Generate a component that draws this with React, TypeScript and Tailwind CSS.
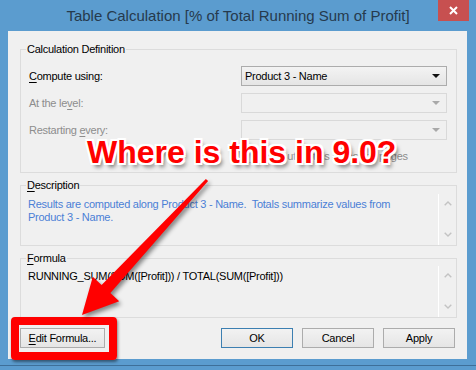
const ui = "[font-family:'Liberation_Sans',Arial,sans-serif] text-[11px] tracking-[-0.25px]";

function Caret({ disabled }: { disabled?: boolean }) {
  return (
    <svg width="8" height="4" viewBox="0 0 8 4" className="block">
      <path d="M0 0 H8 L4 4 Z" fill={disabled ? "#a9a9a9" : "#111"} />
    </svg>
  );
}

function Chevron({ up }: { up?: boolean }) {
  return (
    <svg width="8" height="5" viewBox="0 0 8 5" className="block">
      <path
        d={up ? "M0.7 4.3 L4 1 L7.3 4.3" : "M0.7 0.7 L4 4 L7.3 0.7"}
        fill="none"
        stroke="#c3c3c3"
        strokeWidth="1.4"
      />
    </svg>
  );
}

function Select({ value, disabled }: { value?: string; disabled?: boolean }) {
  return (
    <div
      className={`flex h-[20px] w-[206px] items-center justify-between border pl-[3px] pr-[6px] ${
        disabled
          ? "border-[#d9d9d9] bg-[#f0f0f0]"
          : "border-[#acacac] bg-linear-to-b from-[#f3f3f3] to-[#e5e5e5] text-black"
      }`}
    >
      <span>{value}</span>
      <Caret disabled={disabled} />
    </div>
  );
}

function Scroller({ className }: { className: string }) {
  return (
    <div className={`flex w-[18px] flex-col items-center justify-between border-l border-white ${className}`}>
      <Chevron up />
      <Chevron />
    </div>
  );
}

function Button({ children, primary }: { children: React.ReactNode; primary?: boolean }) {
  return (
    <button
      className={`flex h-[20px] w-[72px] items-center justify-center border bg-linear-to-b from-[#f2f2f2] to-[#e5e5e5] text-black ${
        primary ? "border-[#3c7fb1]" : "border-[#acacac]"
      }`}
    >
      {children}
    </button>
  );
}

export default function App() {
  return (
    <div className={`relative flex h-[370px] w-[476px] flex-col overflow-hidden bg-[#5b9ccf] ${ui}`}>
      {/* title bar */}
      <div className="grid h-[31px] grid-cols-[38px_1fr_38px]">
        <div />
        <div className="text-center text-[15px] leading-[31px] tracking-normal text-[#263a4d]">
          Table Calculation [% of Total Running Sum of Profit]
        </div>
        <div className="flex h-[21px] w-[31px] items-center justify-center bg-[#c75050]">
          <svg width="9" height="9" viewBox="0 0 9 9">
            <path d="M1 1 L8 8 M8 1 L1 8" stroke="#fff" strokeWidth="2" />
          </svg>
        </div>
      </div>

      {/* client area */}
      <div className="mx-[8px] flex h-[328px] w-[459px] flex-col bg-[#f0f0f0] text-black">
        <fieldset className="mt-[11px] ml-[12px] mr-[10px] h-[131px] border border-[#dcdcdc]">
          <legend className="ml-[5px] px-[1px] leading-[14px]">Calculation Definition</legend>
          <div className="flex flex-col gap-[7px] pt-[10px] pl-[8px] pr-[9px]">
            <div className="flex items-center justify-between">
              <span>
                <u className="underline-offset-2">C</u>ompute using:
              </span>
              <Select value="Product 3 - Name" />
            </div>
            <div className="flex items-center justify-between text-[#8d8d8d]">
              <span>
                At the le<u className="underline-offset-2">v</u>el:
              </span>
              <Select disabled />
            </div>
            <div className="flex items-center justify-between text-[#8d8d8d]">
              <span>
                Restarting <u className="underline-offset-2">e</u>very:
              </span>
              <Select disabled />
            </div>
            <div className="mt-[2px] flex h-[14px] items-center justify-end text-[#8d8d8d]">
              <div className="flex w-[206px] items-center gap-[5px] leading-[14px]">
                <span className="h-[13px] w-[13px] border border-[#c5c5c5] bg-[#f4f4f4]" />
                <span>Compute totals across all pages</span>
              </div>
            </div>
          </div>
        </fieldset>

        <fieldset className="mt-[5px] ml-[12px] mr-[10px] h-[68px] border border-[#dcdcdc]">
          <legend className="ml-[5px] px-[1px] leading-[14px]">
            <u className="underline-offset-2">D</u>escription
          </legend>
          <div className="flex h-[53px]">
            <div className="flex-1 whitespace-pre pl-[7px] pt-[6px] leading-[13px] text-[#4b7fd6]">
              <div>Results are computed along Product 3 - Name.  Totals summarize values from</div>
              <div>Product 3 - Name.</div>
            </div>
            <Scroller className="mt-[2px] pt-[7px] pb-[8px]" />
          </div>
        </fieldset>

        <fieldset className="mt-[5px] ml-[12px] mr-[10px] h-[67px] border border-[#dcdcdc]">
          <legend className="ml-[5px] px-[1px] leading-[14px]">
            <u className="underline-offset-2">F</u>ormula
          </legend>
          <div className="flex h-[52px]">
            <div className="flex-1 pl-[7px] pt-[4px] leading-[14px]">
              RUNNING_SUM(SUM([Profit])) / TOTAL(SUM([Profit]))
            </div>
            <Scroller className="mt-[1px] pt-[7px] pb-[8px]" />
          </div>
        </fieldset>

        <div className="mt-[10px] flex h-[20px] pl-[12px] pr-[12px]">
          <div className="relative">
            <button className="flex h-[20px] w-[85px] items-center justify-center border border-[#acacac] bg-linear-to-b from-[#f2f2f2] to-[#e5e5e5]">
              <span>
                <u className="underline-offset-2">E</u>dit Formula...
              </span>
            </button>
            <div className="absolute -left-[9px] -top-[11px] h-[43px] w-[106px] rounded-[4px] border-[8px] border-[#ff0000] shadow-[1px_2px_3px_rgba(0,0,0,0.45)]" />
          </div>
          <div className="ml-auto flex gap-[9px]">
            <Button primary>OK</Button>
            <Button>Cancel</Button>
            <Button>Apply</Button>
          </div>
        </div>
      </div>

      <div className="mt-[6px] h-[1px] w-full bg-[#3e6f99]" />

      {/* annotation arrow */}
      <svg
        width="476"
        height="370"
        viewBox="0 0 476 370"
        className="pointer-events-none absolute left-0 top-0 [filter:drop-shadow(2px_3px_2px_rgba(0,0,0,0.45))]"
      >
        <polygon
          points="205.9,179 208.1,181 110.4,293.1 119.2,301.2 82,315 92.8,276.8 101.6,284.9"
          fill="#ff0000"
        />
      </svg>

      {/* annotation text */}
      <div className="pointer-events-none absolute left-[87px] top-[136px] whitespace-nowrap [font-family:'Liberation_Sans',Arial,sans-serif] text-[32px] leading-[32px] font-bold tracking-normal text-[#ff0000] [text-shadow:-2px_-2px_0_#fff,2px_-2px_0_#fff,-2px_2px_0_#fff,2px_2px_0_#fff,0_-2px_0_#fff,0_2px_0_#fff,-2px_0_0_#fff,2px_0_0_#fff,3px_4px_4px_rgba(0,0,0,0.55)]">
        Where is this in 9.0?
      </div>
    </div>
  );
}
